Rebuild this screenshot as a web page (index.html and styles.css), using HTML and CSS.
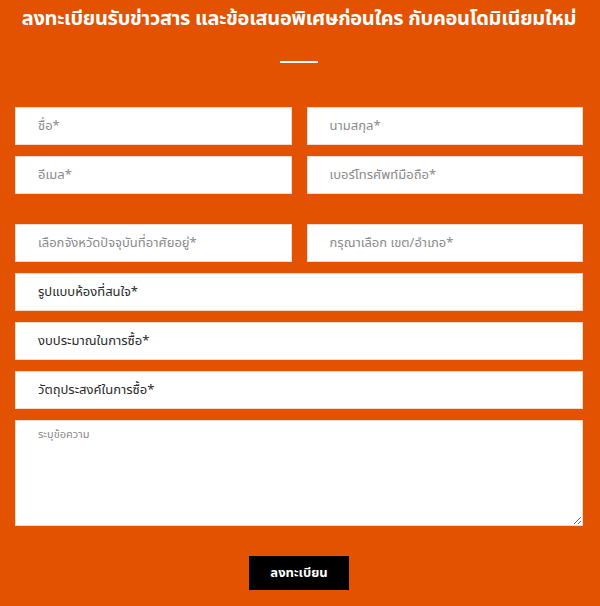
FILE: index.html
```html
<!DOCTYPE html>
<html lang="th">
<head>
    <meta charset="UTF-8">
    <meta name="viewport" content="width=device-width, initial-scale=1.0">
    <title>ลงทะเบียน</title>
    <link rel="stylesheet" href="styles.css">
</head>
<body>
    <div class="register">
        <h1 class="register-title">ลงทะเบียนรับข่าวสาร และข้อเสนอพิเศษก่อนใคร กับคอนโดมิเนียมใหม่</h1>
        <div class="divider"></div>

        <form class="register-form">
            <div class="row">
                <input type="text" class="field" placeholder="ชื่อ*">
                <input type="text" class="field" placeholder="นามสกุล*">
            </div>
            <div class="row">
                <input type="email" class="field" placeholder="อีเมล*">
                <input type="tel" class="field" placeholder="เบอร์โทรศัพท์มือถือ*">
            </div>
            <div class="row row-spaced">
                <div class="field field-select placeholder">เลือกจังหวัดปัจจุบันที่อาศัยอยู่*</div>
                <div class="field field-select placeholder">กรุณาเลือก เขต/อำเภอ*</div>
            </div>
            <div class="field field-select">รูปแบบห้องที่สนใจ*</div>
            <div class="field field-select">งบประมาณในการซื้อ*</div>
            <div class="field field-select">วัตถุประสงค์ในการซื้อ*</div>
            <textarea class="field message" placeholder="ระบุข้อความ"></textarea>
            <div class="actions">
                <button type="submit" class="submit-button">ลงทะเบียน</button>
            </div>
        </form>
    </div>
</body>
</html>
```

FILE: styles.css
```css
:root {
    --brand-color: #e35200;
    --text-color: #ffffff;
    --field-text: #2a2a2a;
    --placeholder-color: #8a8a8a;
}

body, html {
    margin: 0;
    padding: 0;
    background-color: var(--brand-color);
    font-family: 'Noto Sans Thai', 'Noto Sans', 'DejaVu Sans', sans-serif;
    color: var(--text-color);
}

.register {
    padding: 8px 17px 15px 15px;
}

.register-title {
    margin: 0;
    font-size: 20px;
    line-height: 22px;
    font-weight: bold;
    text-align: center;
    letter-spacing: -0.3px;
    white-space: nowrap;
}

.divider {
    width: 38px;
    height: 2px;
    margin: 31px auto 44px;
    background-color: var(--text-color);
}

.register-form {
    display: flex;
    flex-direction: column;
    gap: 11px;
}

.row {
    display: flex;
    gap: 15px;
}

.row .field {
    flex: 1;
    min-width: 0;
}

.row-spaced {
    margin-top: 19px;
}

.field {
    box-sizing: border-box;
    height: 38px;
    margin: 0;
    padding: 0 22px;
    border: 1px solid #f1d9cc;
    border-radius: 0;
    background-color: #ffffff;
    color: var(--field-text);
    font-family: inherit;
    font-size: 13px;
    line-height: 36px;
    outline: none;
}

.field::placeholder {
    color: var(--placeholder-color);
}

.field-select.placeholder {
    color: var(--placeholder-color);
}

.message {
    height: 106px;
    padding: 6px 22px;
    font-size: 11px;
    line-height: 16px;
    resize: vertical;
}

.actions {
    display: flex;
    justify-content: center;
    margin-top: 19px;
}

.submit-button {
    width: 100px;
    height: 34px;
    padding: 0;
    border: none;
    background-color: #000000;
    color: var(--text-color);
    font-family: inherit;
    font-size: 13px;
    font-weight: bold;
    cursor: pointer;
}
```
